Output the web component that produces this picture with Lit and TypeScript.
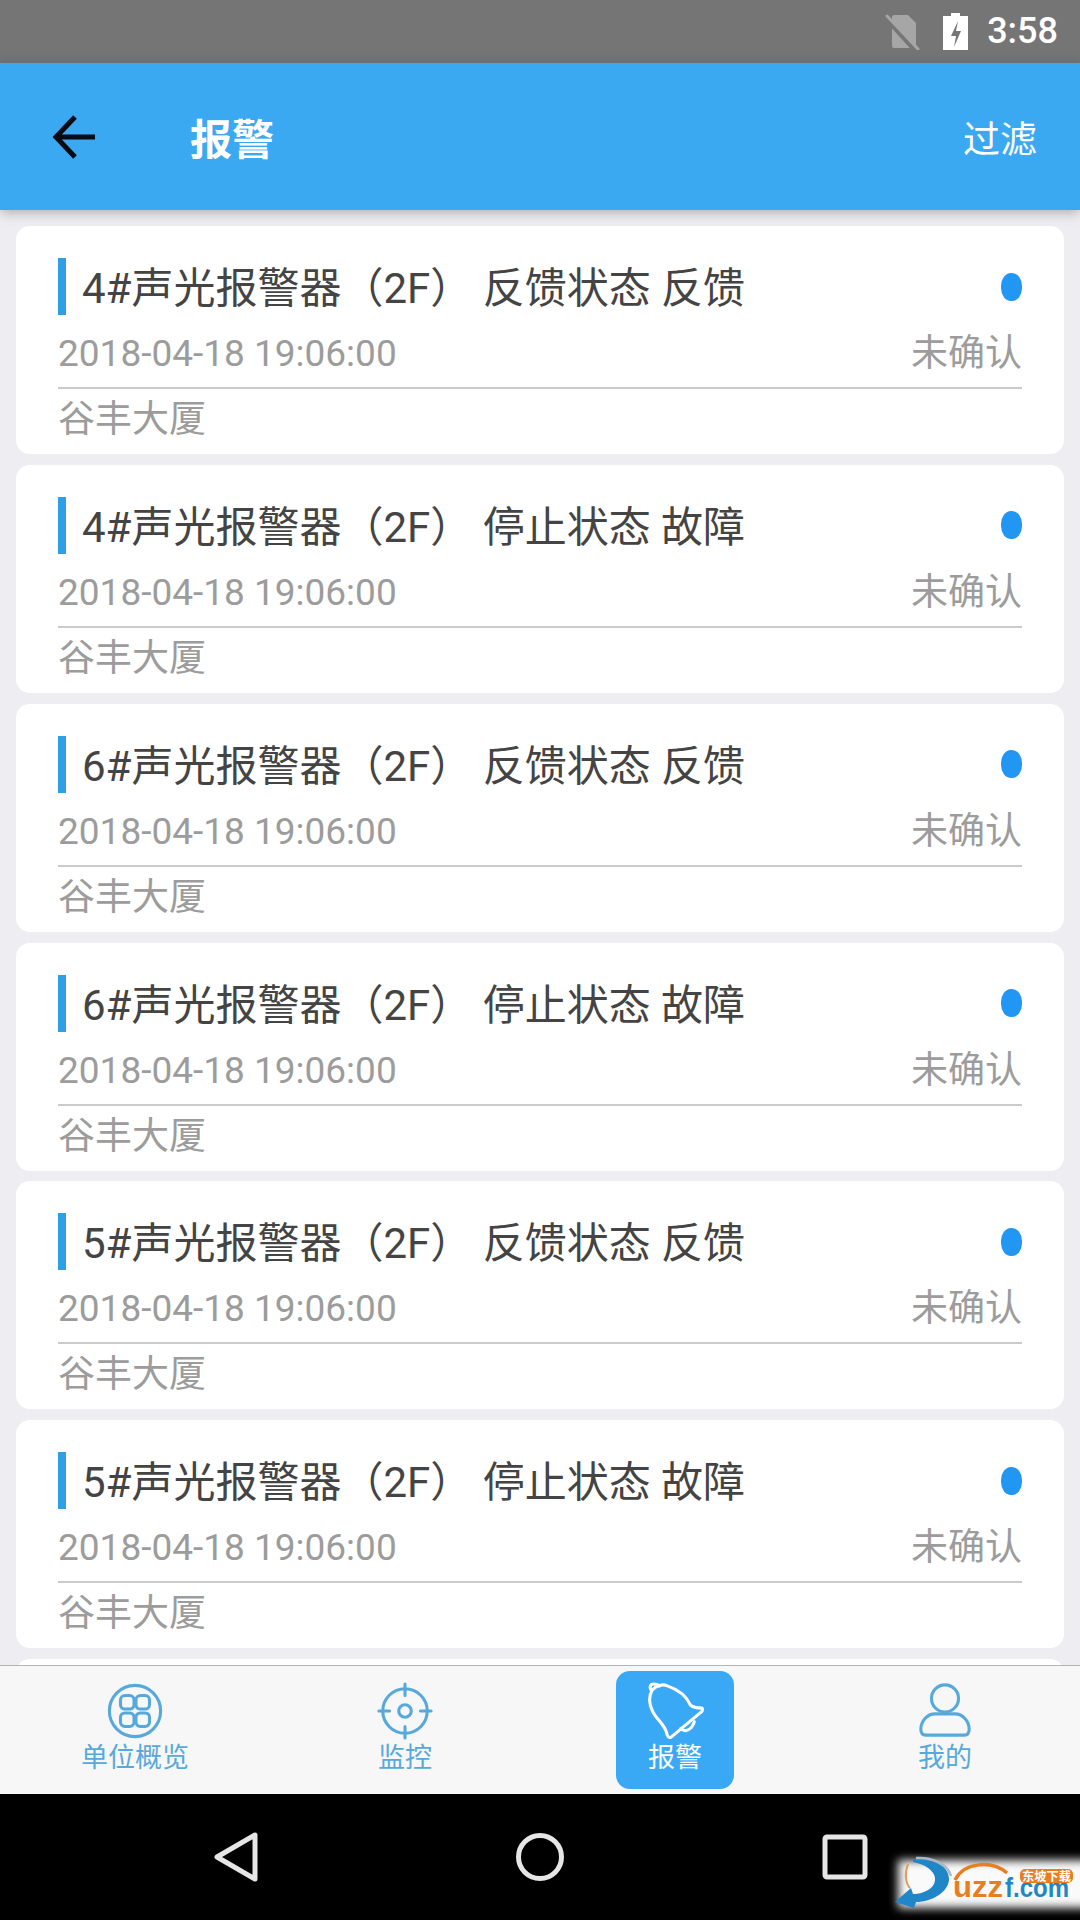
import { LitElement, html, css, svg } from 'lit'
import { customElement } from 'lit/decorators.js'

const alarms = [
  '4#声光报警器（2F） 反馈状态 反馈',
  '4#声光报警器（2F） 停止状态 故障',
  '6#声光报警器（2F） 反馈状态 反馈',
  '6#声光报警器（2F） 停止状态 故障',
  '5#声光报警器（2F） 反馈状态 反馈',
  '5#声光报警器（2F） 停止状态 故障',
]

const gridIcon = svg`
  <circle cx="30" cy="30" r="26.5" />
  <rect x="15" y="14" width="14" height="14" rx="4.5" />
  <rect x="31" y="14" width="14" height="14" rx="4.5" />
  <rect x="15" y="32" width="14" height="14" rx="4.5" />
  <rect x="31" y="32" width="14" height="14" rx="4.5" />`

const targetIcon = svg`
  <circle cx="30" cy="30" r="23" />
  <circle cx="30" cy="30" r="6.5" />
  <path d="M30 2v12M30 46v12M3 30h11M46 30h11" />`

const bellIcon = svg`
  <path d="M6 9C10 3 18 2 22 4 34 8 42 15 46 24 49 27 54 27 58 27 59 29 58 31 56 32L26 57C24 58 23 57 22 55 21 48 17 44 12 38 5 30 1 18 6 9Z" />
  <path d="M6 9C3 6 4 2 8 2 11 2 13 3 14 4" />
  <path d="M36 48C39 52 47 51 50 41" />`

const userIcon = svg`
  <circle cx="30" cy="17" r="14" />
  <path d="M20 33h20c9 0 15 8 15 16 0 4-2 6-5 6H10c-3 0-5-2-5-6 0-8 6-16 15-16Z" />`

const tabs = [
  { label: '单位概览', icon: gridIcon },
  { label: '监控', icon: targetIcon },
  { label: '报警', icon: bellIcon, active: true },
  { label: '我的', icon: userIcon },
]

@customElement('app-root')
export class AppRoot extends LitElement {
  static styles = css`
    :host {
      display: flex;
      flex-direction: column;
      position: relative;
      width: 1080px;
      height: 1920px;
      overflow: hidden;
      background: #eeeef2;
      font-family: Roboto, 'Noto Sans CJK SC', sans-serif;
    }

    .status {
      display: flex;
      align-items: center;
      justify-content: flex-end;
      flex: none;
      height: 63px;
      padding-right: 22px;
      box-sizing: border-box;
      background: #757575;
      color: #fff;
    }

    .status .sim { width: 36px; height: 36px; margin-right: 22px; }
    .status .battery { width: 25px; height: 37px; margin-right: 19px; }
    .status .time { font-size: 36px; font-weight: 500; line-height: 63px; }

    .header {
      display: flex;
      align-items: center;
      flex: none;
      height: 147px;
      padding: 0 43px 0 52px;
      background: #3ba9f2;
      color: #fff;
      box-shadow: 0 2px 12px rgba(60, 60, 80, 0.4);
      position: relative;
      z-index: 1;
    }

    .header .back { width: 44px; height: 44px; margin-right: 94px; }
    .header .title { flex: 1; font-size: 42px; line-height: 50px; font-weight: 700; margin-top: 8px; }
    .header .filter { font-size: 37px; line-height: 50px; margin-top: 8px; }

    .list {
      flex: 1;
      min-height: 0;
      overflow: hidden;
      display: flex;
      flex-direction: column;
      gap: 10.85px;
      padding: 16px 16px 0;
    }

    .card {
      flex: none;
      height: 228px;
      box-sizing: border-box;
      padding: 32px 42px 0;
      background: #fff;
      border-radius: 14px;
    }

    .title-row {
      display: flex;
      align-items: center;
      height: 57px;
    }

    .title-row .bar {
      flex: none;
      width: 8px;
      height: 57px;
      margin-right: 16px;
      background: #2f9fe6;
    }

    .title-row .name {
      flex: 1;
      font-size: 42px;
      line-height: 52px;
      margin-top: 5px;
      color: #444;
      white-space: pre;
    }

    .title-row .dot {
      flex: none;
      width: 21px;
      height: 28px;
      border-radius: 10px / 13px;
      background: #2196f3;
    }

    .meta-row {
      display: flex;
      justify-content: space-between;
      height: 72px;
      padding-top: 7px;
      box-sizing: border-box;
      font-size: 37px;
      line-height: 64px;
      color: #9c9c9c;
    }

    .rule { height: 2px; background: #cbcbcb; }

    .site {
      height: 62px;
      padding-top: 1px;
      box-sizing: border-box;
      font-size: 37px;
      line-height: 60px;
      color: #9c9c9c;
    }

    .tabbar {
      display: grid;
      grid-template-columns: repeat(4, 270px);
      flex: none;
      height: 129px;
      box-sizing: border-box;
      background: #f7f7f7;
      border-top: 1px solid #b4b4b4;
      position: relative;
      z-index: 1;
    }

    .tab {
      display: flex;
      flex-direction: column;
      align-items: center;
      width: 118px;
      height: 118px;
      margin: 5px auto 0;
      padding-top: 11px;
      box-sizing: border-box;
      border-radius: 14px;
      color: #57a9dc;
    }

    .tab.active {
      background: #3aa9f5;
      color: #fff;
    }

    .tab svg {
      flex: none;
      width: 58px;
      height: 58px;
      fill: none;
      stroke: currentColor;
      stroke-width: 3.2;
      stroke-linejoin: round;
      stroke-linecap: round;
    }

    .tab .label {
      font-size: 27px;
      line-height: 32px;
      margin-top: 2px;
      white-space: nowrap;
    }

    .nav {
      display: flex;
      align-items: center;
      flex: none;
      height: 126px;
      background: #000;
      padding-left: 212px;
      box-sizing: border-box;
    }

    .nav svg {
      flex: none;
      fill: none;
      stroke: #e6e6e6;
      stroke-width: 5;
      stroke-linejoin: round;
    }

    .nav .back { width: 48px; height: 54px; margin-right: 254px; }
    .nav .home { width: 52px; height: 52px; margin-right: 255.5px; }
    .nav .recent { width: 46px; height: 46px; }

    /* corner stamp over the navigation bar */
    .stamp {
      position: absolute;
      right: 0;
      bottom: 8px;
      width: 186px;
      height: 56px;
    }

    .stamp .glow {
      position: absolute;
      inset: 4px -12px 4px 4px;
      background: #fafafa;
      filter: blur(5px);
    }

    .stamp svg {
      position: absolute;
      inset: 0;
      width: 186px;
      height: 56px;
    }

    .stamp text { font-family: 'Liberation Sans', 'Noto Sans CJK SC', sans-serif; font-weight: 700; }
  `

  private renderCard(name: string) {
    return html`
      <div class="card">
        <div class="title-row">
          <span class="bar"></span>
          <span class="name">${name}</span>
          <span class="dot"></span>
        </div>
        <div class="meta-row">
          <span>2018-04-18 19:06:00</span>
          <span>未确认</span>
        </div>
        <div class="rule"></div>
        <div class="site">谷丰大厦</div>
      </div>
    `
  }

  render() {
    return html`
      <div class="status">
        <svg class="sim" viewBox="0 0 36 36">
          <path d="M9 1h14l8 8v23a2 2 0 0 1-2 2H9a2 2 0 0 1-2-2V3a2 2 0 0 1 2-2Z" fill="#a6a6a6" />
          <path d="M0 3l30 33" stroke="#757575" stroke-width="5" />
          <path d="M2 2l31 33" stroke="#a6a6a6" stroke-width="3" stroke-linecap="round" />
        </svg>
        <svg class="battery" viewBox="0 0 25 37">
          <path d="M8 0h9v3h8v34H0V3h8Z" fill="#fff" />
          <path d="M15 8l-7 15h5l-2 11 7-16h-5Z" fill="#757575" />
        </svg>
        <span class="time">3:58</span>
      </div>
      <div class="header">
        <svg class="back" viewBox="0 0 44 44" fill="none" stroke="#0a0a12" stroke-width="5">
          <path d="M43 22H4M23 2 4 22l19 20" />
        </svg>
        <span class="title">报警</span>
        <span class="filter">过滤</span>
      </div>
      <div class="list">
        ${alarms.map(name => this.renderCard(name))}
        <div class="card"></div>
      </div>
      <div class="tabbar">
        ${tabs.map(t => html`
          <div class="tab ${t.active ? 'active' : ''}">
            <svg viewBox="0 0 60 60">${t.icon}</svg>
            <span class="label">${t.label}</span>
          </div>
        `)}
      </div>
      <div class="nav">
        <svg class="back" viewBox="0 0 48 54"><path d="M43 5v44L5 27Z" /></svg>
        <svg class="home" viewBox="0 0 52 52"><circle cx="26" cy="26" r="21.5" /></svg>
        <svg class="recent" viewBox="0 0 46 46"><rect x="3" y="3" width="40" height="40" rx="2" /></svg>
      </div>
      <div class="stamp">
        <div class="glow"></div>
        <svg viewBox="0 0 186 56">
          <path d="M19 4C38 2 56 9 55 24 54 36 38 46 22 46L20 52 1 46 17 32 19 38C30 38 42 32 41 22 40 14 30 8 19 6Z" fill="#1f86c8" />
          <path d="M14 8C10 18 12 28 16 32" fill="none" stroke="#e49a5a" stroke-width="2" />
          <path d="M22 2C38 1 54 8 57 20" fill="none" stroke="#a9b8c4" stroke-width="2.5" />
          <path d="M61 24C70 6 98 4 113 17" fill="none" stroke="#ea7d1e" stroke-width="3.5" />
          <text x="59" y="41" font-size="29" fill="#ea7d1e" textLength="50" lengthAdjust="spacingAndGlyphs">uzz</text>
          <text x="111" y="41" font-size="27" fill="#1f86c8" textLength="64" lengthAdjust="spacingAndGlyphs">f.com</text>
          <rect x="126" y="13" width="53" height="14" rx="5" fill="#ea7d1e" />
          <text x="128" y="24.500" font-size="12" fill="#fff" textLength="49" lengthAdjust="spacingAndGlyphs">东坡下载</text>
        </svg>
      </div>
    `
  }
}
